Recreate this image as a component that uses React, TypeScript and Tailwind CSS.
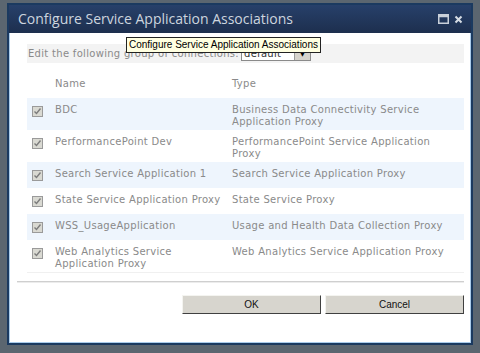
import React from "react";

type Row = { name: string[]; type: string[] };

const rows: Row[] = [
  { name: ["BDC"], type: ["Business Data Connectivity Service", "Application Proxy"] },
  { name: ["PerformancePoint Dev"], type: ["PerformancePoint Service Application", "Proxy"] },
  { name: ["Search Service Application 1"], type: ["Search Service Application Proxy"] },
  { name: ["State Service Application Proxy"], type: ["State Service Proxy"] },
  { name: ["WSS_UsageApplication"], type: ["Usage and Health Data Collection Proxy"] },
  { name: ["Web Analytics Service", "Application Proxy"], type: ["Web Analytics Service Application Proxy"] },
];

function CheckBox() {
  return (
    <div className="mt-[2px] flex h-[11px] w-[11px] shrink-0 items-center justify-center border border-[#9a9a9a] bg-[#d9d9d2]">
      <svg width="9" height="9" viewBox="0 0 9 9">
        <path d="M1.5 4.5 L3.5 6.5 L7.5 1.5" fill="none" stroke="#7c7c7c" strokeWidth="1.4" />
      </svg>
    </div>
  );
}

export default function App() {
  const body = "font-['DejaVu_Sans',sans-serif] text-[10px] tracking-[0.3px] leading-[12px] text-[#8a8a8a]";
  return (
    <div className="h-[353px] w-[480px] overflow-hidden bg-[#5b6670] pl-[7px] pt-[3px]">
      <div className="relative h-[342px] w-[466px] border-2 border-[#1b3a60] bg-[#1e3152]">
        {/* title bar */}
        <div className="flex h-[28px] items-center bg-gradient-to-b from-[#27406a] to-[#1d2f4e] pl-[9px] pr-[8px]">
          <span className="flex-1 font-['Open_Sans',sans-serif] text-[14px] leading-none text-[#cdd5df]">
            Configure Service Application Associations
          </span>
          <div className="flex items-center gap-[5px]">
            <svg width="11" height="10" viewBox="0 0 11 10">
              <rect x="0.75" y="0.75" width="9.5" height="8.5" fill="none" stroke="#c9d0da" strokeWidth="1.5" />
              <rect x="0.75" y="0.75" width="9.5" height="2.5" fill="#c9d0da" />
            </svg>
            <svg width="9" height="9" viewBox="0 0 9 9">
              <path d="M1.5 1.5 L7.5 7.5 M7.5 1.5 L1.5 7.5" stroke="#d6dce4" strokeWidth="2" />
            </svg>
          </div>
        </div>

        {/* body */}
        <div className="h-[310px] border border-t-0 border-[#a9cbea] bg-white">
          <div className="pl-[17px] pr-[6px] pt-[11px]">
            <div className={`flex h-[19px] items-center bg-[#f3f3f3] pl-[1px] ${body}`}>
              <span>Edit the following group of connections:</span>
              <div className="ml-[2px] flex h-[14px] w-[70px] items-center border border-[#8a8a8a] bg-white">
                <span className="flex-1 pl-[2px] text-[#333]">default</span>
                <div className="flex h-full w-[16px] items-center justify-center border-l border-[#9a9a9a] bg-[#d6d3cc] text-[7px] text-black">
                  ▼
                </div>
              </div>
            </div>

            <div className={`mt-[11px] flex h-[24px] pt-[4px] ${body} text-[#7a7a7a]`}>
              <span className="ml-[28px] w-[177px]">Name</span>
              <span>Type</span>
            </div>

            <div>
              {rows.map((r, i) => (
                <div
                  key={i}
                  className={`flex min-h-[26px] pb-[2px] pl-[5px] pt-[6px] ${body} ${i % 2 === 0 ? "bg-[#eef5fd]" : "bg-white"} ${i === rows.length - 1 ? "border-b border-[#f0f0f0]" : ""}`}
                >
                  <CheckBox />
                  <div className="ml-[12px] w-[177px]">
                    {r.name.map((t) => (
                      <div key={t}>{t}</div>
                    ))}
                  </div>
                  <div>
                    {r.type.map((t) => (
                      <div key={t}>{t}</div>
                    ))}
                  </div>
                </div>
              ))}
            </div>
          </div>

          <div className="ml-[7px] mr-[6px] mt-[8px] h-[2px] border-t border-b border-[#cfcfcf] border-b-[#ececec]" />

          <div className="mr-[6px] mt-[12px] flex justify-end gap-[4px]">
            {["OK", "Cancel"].map((b) => (
              <div
                key={b}
                className="flex h-[19px] w-[139px] items-center justify-center border border-l-[#f4f4f0] border-t-[#f4f4f0] border-r-[#404040] border-b-[#404040] bg-[#d7d5ce] font-['Liberation_Sans',sans-serif] text-[10px] text-[#111]"
              >
                {b}
              </div>
            ))}
          </div>
        </div>

        {/* tooltip */}
        <div className="absolute left-[117px] top-[32px] border border-[#222] bg-[#ffffe1] px-[2px] font-['Liberation_Sans',sans-serif] text-[10px] leading-[14px] text-black">
          Configure Service Application Associations
        </div>
      </div>
    </div>
  );
}
